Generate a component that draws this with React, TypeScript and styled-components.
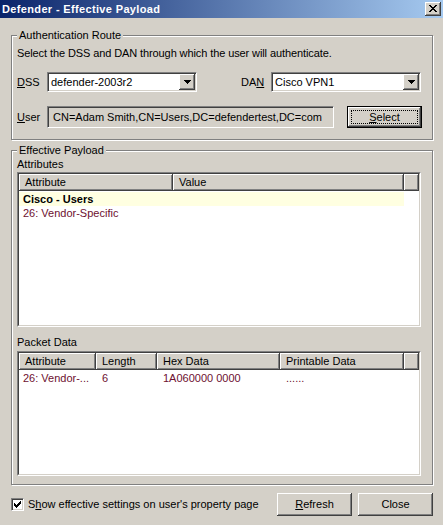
import React from 'react';
import styled, { createGlobalStyle, css } from 'styled-components';

const Global = createGlobalStyle`
  html, body { margin: 0; padding: 0; background: #d4d0c8; }
  body { font-family: "Liberation Sans", Arial, sans-serif; font-size: 11px; color: #000; }
  #root { width: 443px; height: 525px; }
  * { box-sizing: border-box; }
`;

const raised = css`
  background: #d4d0c8;
  box-shadow: inset -1px -1px 0 #404040, inset 1px 1px 0 #fff, inset -2px -2px 0 #808080, inset 2px 2px 0 #d4d0c8;
`;

const sunken = css`
  border: 1px solid;
  border-color: #808080 #fff #fff #808080;
  box-shadow: inset 1px 1px 0 #404040, inset -1px -1px 0 #d4d0c8;
  padding: 1px;
`;

const Window = styled.div`
  width: 443px;
  height: 525px;
  background: #d4d0c8;
  display: flex;
  flex-direction: column;
  overflow: hidden;
  line-height: 13px;
`;

const TitleBar = styled.div`
  flex: none;
  height: 18px;
  display: flex;
  align-items: center;
  justify-content: space-between;
  padding: 0 2px 0 2px;
  background: linear-gradient(to right, #0a246a, #a6caf0);
`;

const Title = styled.span`
  color: #fff;
  font-weight: bold;
  font-size: 11px;
  letter-spacing: 0.35px;
  white-space: nowrap;
`;

const CaptionButton = styled.div`
  width: 16px;
  height: 14px;
  ${raised};
  display: flex;
  align-items: center;
  justify-content: center;
  padding-bottom: 1px;
`;

const Body = styled.div`
  flex: 1;
  display: flex;
  flex-direction: column;
  padding: 17px 10px 0 11px;
`;

const Group = styled.section<{ $h: number; $mt?: number }>`
  position: relative;
  width: 422px;
  height: ${p => p.$h}px;
  margin-top: ${p => p.$mt ?? 0}px;
  border: 1px solid #808080;
  box-shadow: 1px 1px 0 #fff, inset 1px 1px 0 #fff;
  display: flex;
  flex-direction: column;
  flex: none;
`;

const Legend = styled.span`
  position: absolute;
  top: -7px;
  left: 5px;
  padding: 0 2px;
  background: #d4d0c8;
  line-height: 13px;
  white-space: nowrap;
`;

const RouteContent = styled.div`
  display: flex;
  flex-direction: column;
  padding: 11px 10px 0 5px;
`;

const Text = styled.div`
  line-height: 13px;
  letter-spacing: -0.1px;
  white-space: nowrap;
`;

const FormRow = styled.div<{ $mt: number }>`
  display: flex;
  align-items: center;
  margin-top: ${p => p.$mt}px;
`;

const Label = styled.label<{ $w: number; $ml?: number }>`
  flex: none;
  width: ${p => p.$w}px;
  margin-left: ${p => p.$ml ?? 0}px;
  white-space: nowrap;
`;

const Combo = styled.div<{ $w: number }>`
  flex: none;
  width: ${p => p.$w}px;
  height: 20px;
  ${sunken};
  background: #fff;
  display: flex;
  align-items: center;
`;

const ComboText = styled.span`
  flex: 1;
  padding-left: 2px;
  white-space: nowrap;
  overflow: hidden;
`;

const DropButton = styled.div`
  flex: none;
  width: 16px;
  height: 16px;
  ${raised};
  display: flex;
  align-items: center;
  justify-content: center;
`;

const ReadField = styled.div<{ $w: number }>`
  flex: none;
  width: ${p => p.$w}px;
  height: 22px;
  ${sunken};
  background: #d4d0c8;
  display: flex;
  align-items: center;
  padding-left: 5px;
  white-space: nowrap;
  overflow: hidden;
`;

const Button = styled.div<{ $default?: boolean; $ml?: number }>`
  flex: none;
  width: 75px;
  height: ${p => (p.$default ? 22 : 23)}px;
  margin-left: ${p => p.$ml ?? 0}px;
  ${raised};
  border: ${p => (p.$default ? '1px solid #000' : 'none')};
  padding: 3px;
  display: flex;
  align-items: stretch;
  justify-content: center;
  white-space: nowrap;
`;

const ButtonFace = styled.span<{ $focus?: boolean }>`
  flex: 1;
  display: flex;
  align-items: center;
  justify-content: center;
  border: 1px dotted ${p => (p.$focus ? '#000' : 'transparent')};
`;

const PayloadContent = styled.div`
  display: flex;
  flex-direction: column;
  padding: 7px 10px 0 5px;
`;

const Caption = styled.div<{ $mt?: number }>`
  line-height: 13px;
  margin-top: ${p => p.$mt ?? 0}px;
  white-space: nowrap;
`;

const ListFrame = styled.div<{ $h: number; $mt?: number }>`
  flex: none;
  width: 404px;
  height: ${p => p.$h}px;
  margin-top: ${p => p.$mt ?? 0}px;
  border: 1px solid;
  border-color: #808080 #fff #fff #808080;
  display: flex;
`;

const ListInner = styled.div`
  flex: 1;
  border: 1px solid;
  border-color: #404040 #d4d0c8 #d4d0c8 #404040;
  background: #fff;
  display: flex;
  flex-direction: column;
  overflow: hidden;
`;

const HeaderRow = styled.div`
  display: flex;
  flex: none;
`;

const HeadCell = styled.div<{ $w: number }>`
  flex: none;
  width: ${p => p.$w}px;
  height: 17px;
  line-height: 17px;
  padding-left: 6px;
  background: #d4d0c8;
  box-shadow: inset -1px -1px 0 #404040, inset 1px 1px 0 #fff, inset -2px -2px 0 #808080;
  white-space: nowrap;
  overflow: hidden;
`;

const Rows = styled.div`
  padding-top: 1px;
  display: flex;
  flex-direction: column;
  align-items: flex-start;
`;

const Row = styled.div<{ $highlight?: boolean }>`
  display: flex;
  height: 14px;
  line-height: 14px;
  background: ${p => (p.$highlight ? '#ffffe1' : 'transparent')};
`;

const Cell = styled.div<{ $w: number; $first?: boolean; $bold?: boolean; $tone?: 'data' | 'plain' }>`
  flex: none;
  width: ${p => p.$w}px;
  padding-left: ${p => (p.$first ? 4 : 6)}px;
  white-space: nowrap;
  overflow: hidden;
  font-weight: ${p => (p.$bold ? 'bold' : 'normal')};
  color: ${p => (p.$tone === 'data' ? '#6e1030' : '#000')};
`;

const Footer = styled.div`
  display: flex;
  align-items: center;
  height: 23px;
  margin-top: 8px;
`;

const CheckBox = styled.div`
  flex: none;
  width: 13px;
  height: 13px;
  border: 1px solid;
  border-color: #808080 #fff #fff #808080;
  box-shadow: inset 1px 1px 0 #404040, inset -1px -1px 0 #d4d0c8;
  background: #fff;
  display: flex;
  align-items: center;
  justify-content: center;
`;

const CheckLabel = styled.span`
  margin-left: 4px;
  white-space: nowrap;
  flex: 1;
`;

const Pixels = ({ rows, color = '#000' }: { rows: string[]; color?: string }) => (
  <svg width={rows[0].length} height={rows.length} viewBox={`0 0 ${rows[0].length} ${rows.length}`} shapeRendering="crispEdges">
    {rows.flatMap((r, y) =>
      r.split('').map((c, x) => (c === 'x' ? <rect key={`${x}-${y}`} x={x} y={y} width={1} height={1} fill={color} /> : null))
    )}
  </svg>
);

const CLOSE_X = ['xx....xx', '.xx..xx.', '..xxxx..', '...xx...', '..xxxx..', '.xx..xx.', 'xx....xx'];
const ARROW = ['xxxxxxx', '.xxxxx.', '..xxx..', '...x...'];
const CHECK = ['......x', '.....xx', 'x...xxx', 'xx.xxx.', 'xxxxx..', '.xxx...', '..x....'];

const attrCols = [154, 231, 15];
const packetCols = [77, 61, 123, 124, 15];

export default function App() {
  return (
    <>
      <Global />
      <Window>
        <TitleBar>
          <Title>Defender - Effective Payload</Title>
          <CaptionButton>
            <Pixels rows={CLOSE_X} />
          </CaptionButton>
        </TitleBar>
        <Body>
          <Group $h={105}>
            <Legend>Authentication Route</Legend>
            <RouteContent>
              <Text>Select the DSS and DAN through which the user will authenticate.</Text>
              <FormRow $mt={12}>
                <Label $w={30}><u>D</u>SS</Label>
                <Combo $w={150}>
                  <ComboText>defender-2003r2</ComboText>
                  <DropButton><Pixels rows={ARROW} /></DropButton>
                </Combo>
                <Label $w={30} $ml={44}>DA<u>N</u></Label>
                <Combo $w={150}>
                  <ComboText>Cisco VPN1</ComboText>
                  <DropButton><Pixels rows={ARROW} /></DropButton>
                </Combo>
              </FormRow>
              <FormRow $mt={14}>
                <Label $w={30}><u>U</u>ser</Label>
                <ReadField $w={287}>CN=Adam Smith,CN=Users,DC=defendertest,DC=com</ReadField>
                <Button $default $ml={13}>
                  <ButtonFace $focus><u>S</u>elect</ButtonFace>
                </Button>
              </FormRow>
            </RouteContent>
          </Group>

          <Group $h={335} $mt={10}>
            <Legend>Effective Payload</Legend>
            <PayloadContent>
              <Caption>Attributes</Caption>
              <ListFrame $h={155} $mt={1}>
                <ListInner>
                  <HeaderRow>
                    <HeadCell $w={attrCols[0]}>Attribute</HeadCell>
                    <HeadCell $w={attrCols[1]}>Value</HeadCell>
                    <HeadCell $w={attrCols[2]} />
                  </HeaderRow>
                  <Rows>
                    <Row $highlight>
                      <Cell $w={attrCols[0]} $first $bold>Cisco - Users</Cell>
                      <Cell $w={attrCols[1]} />
                    </Row>
                    <Row>
                      <Cell $w={attrCols[0]} $first $tone="data">26: Vendor-Specific</Cell>
                      <Cell $w={attrCols[1]} />
                    </Row>
                  </Rows>
                </ListInner>
              </ListFrame>

              <Caption $mt={9}>Packet Data</Caption>
              <ListFrame $h={125} $mt={2}>
                <ListInner>
                  <HeaderRow>
                    <HeadCell $w={packetCols[0]}>Attribute</HeadCell>
                    <HeadCell $w={packetCols[1]}>Length</HeadCell>
                    <HeadCell $w={packetCols[2]}>Hex Data</HeadCell>
                    <HeadCell $w={packetCols[3]}>Printable Data</HeadCell>
                    <HeadCell $w={packetCols[4]} />
                  </HeaderRow>
                  <Rows>
                    <Row>
                      <Cell $w={packetCols[0]} $first $tone="data">26: Vendor-...</Cell>
                      <Cell $w={packetCols[1]} $tone="data">6</Cell>
                      <Cell $w={packetCols[2]} $tone="data">1A060000 0000</Cell>
                      <Cell $w={packetCols[3]} $tone="data">......</Cell>
                    </Row>
                  </Rows>
                </ListInner>
              </ListFrame>
            </PayloadContent>
          </Group>

          <Footer>
            <CheckBox><Pixels rows={CHECK} /></CheckBox>
            <CheckLabel>S<u>h</u>ow effective settings on user's property page</CheckLabel>
            <Button>
              <ButtonFace><u>R</u>efresh</ButtonFace>
            </Button>
            <Button $ml={6}>
              <ButtonFace>Close</ButtonFace>
            </Button>
          </Footer>
        </Body>
      </Window>
    </>
  );
}
